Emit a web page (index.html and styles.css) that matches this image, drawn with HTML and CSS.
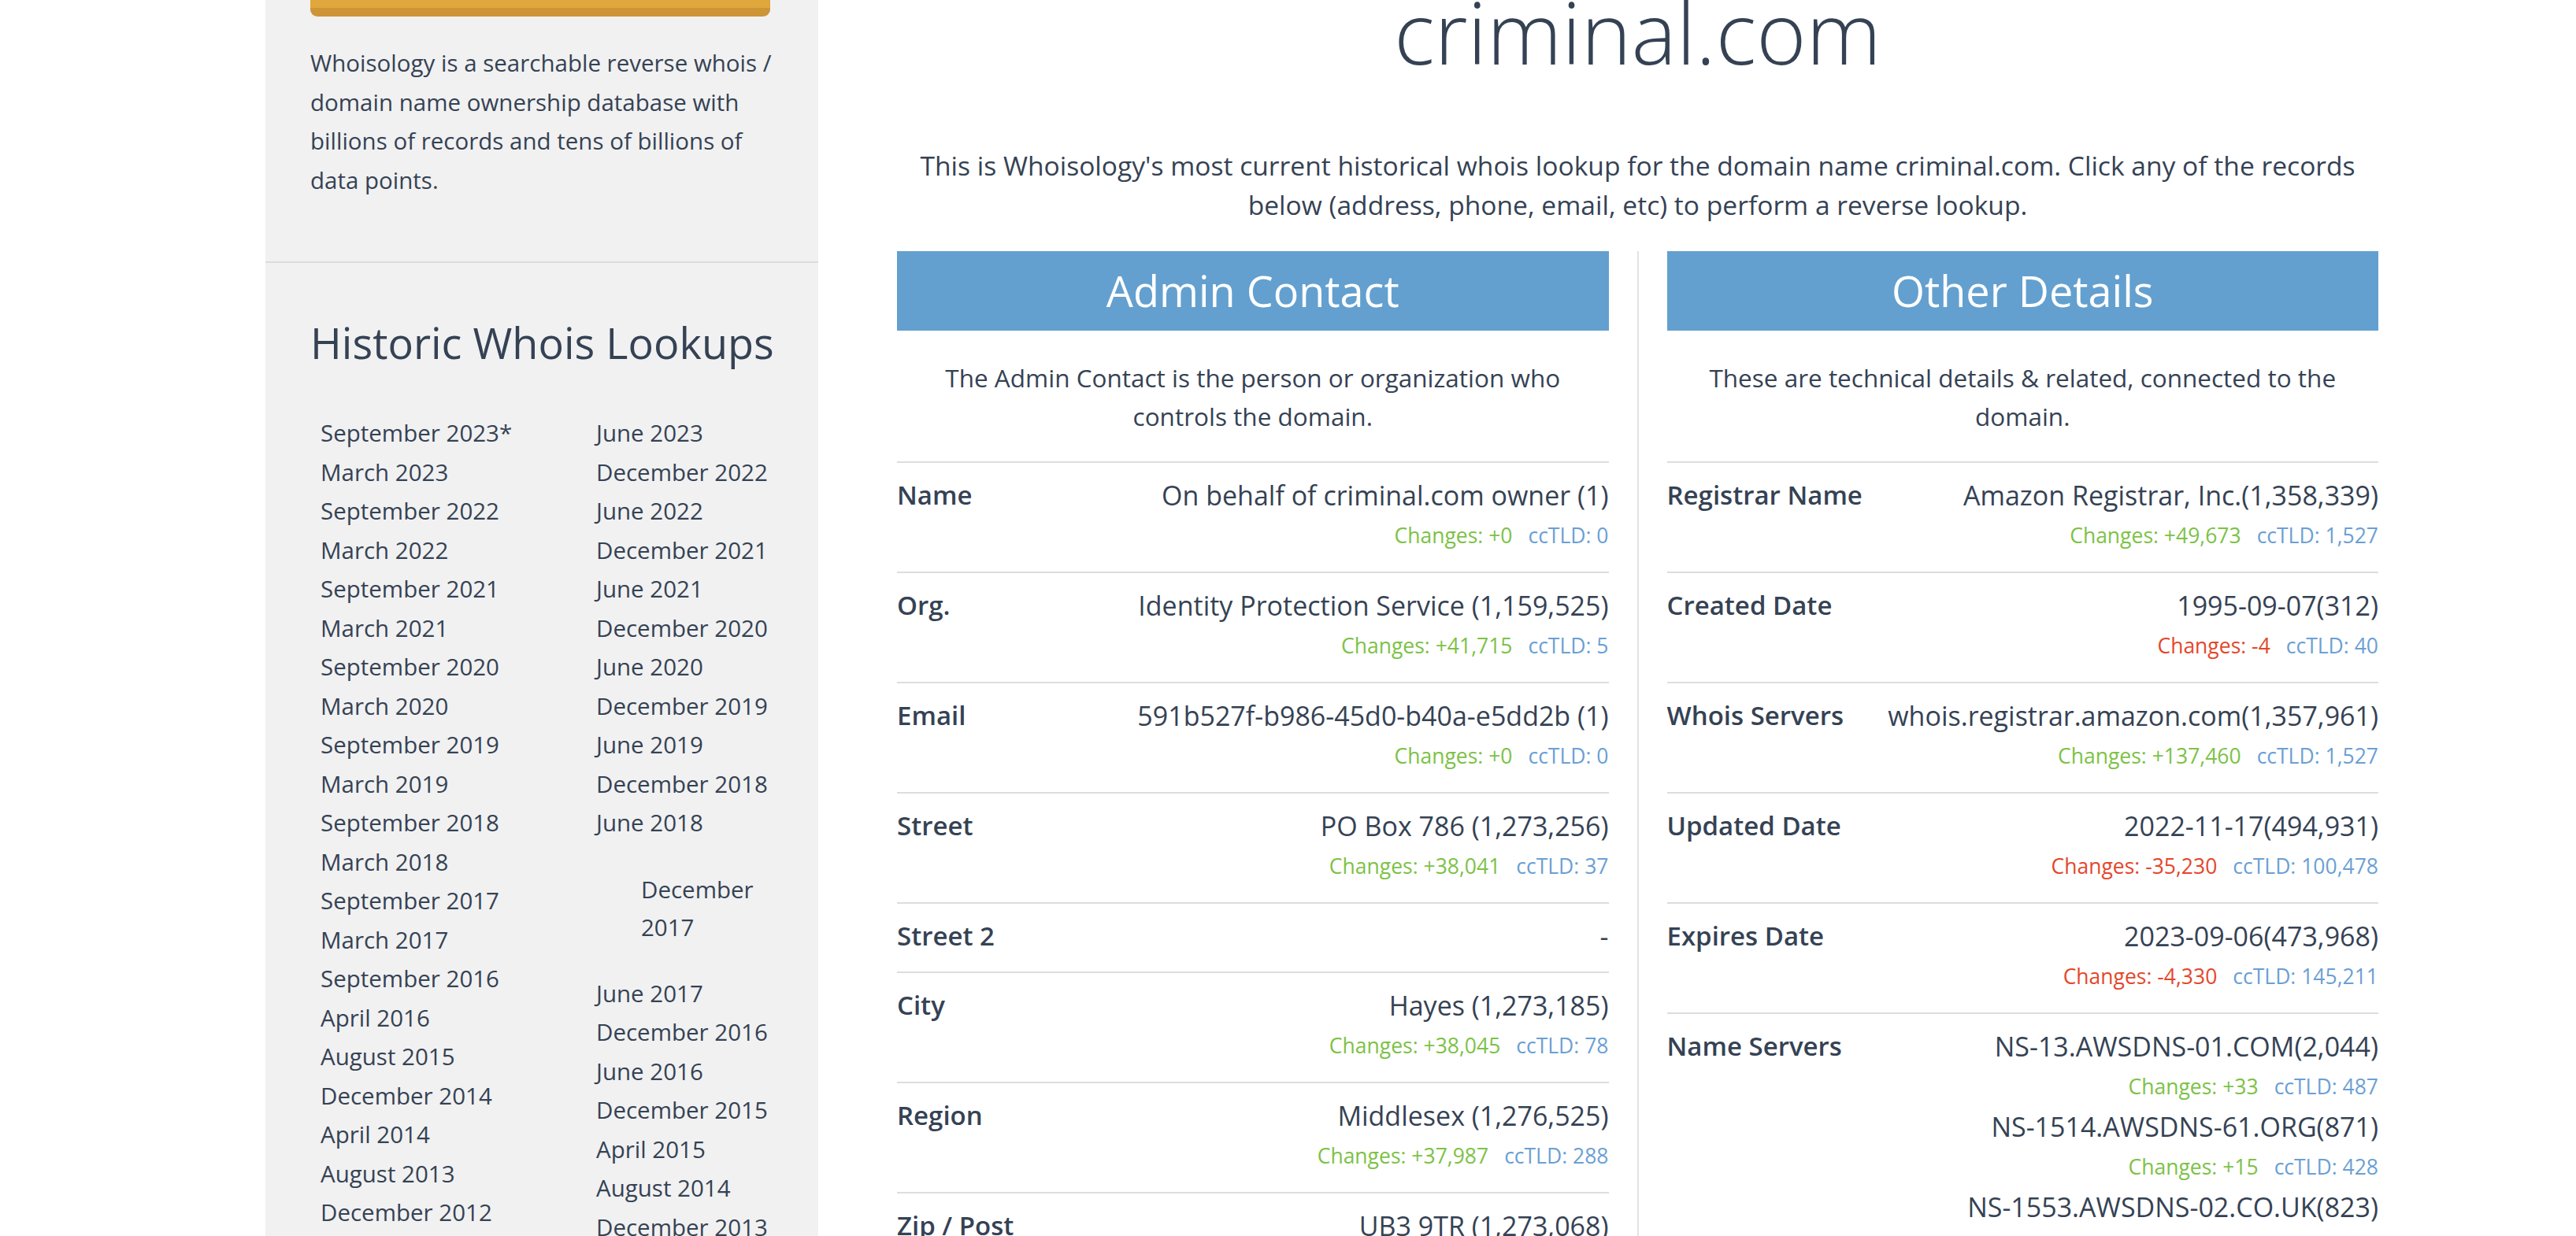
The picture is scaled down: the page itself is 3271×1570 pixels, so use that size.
FILE: index.html
```html
<!DOCTYPE html>
<html lang="en">
<head>
<meta charset="utf-8">
<title>criminal.com - Whoisology</title>
<link rel="stylesheet" href="styles.css">
</head>
<body>
<div class="page">
  <aside class="sidebar">
    <div class="sb-top">
      <a class="btn-gold" href="#"></a>
      <p class="sb-desc">Whoisology is a searchable reverse whois / domain name ownership database with billions of records and tens of billions of data points.</p>
    </div>
    <div class="sb-history">
      <h2 class="sb-title">Historic Whois Lookups</h2>
      <div class="hist-cols">
        <ul class="hist-col hist-col-a">
          <li>September 2023*</li>
          <li>March 2023</li>
          <li>September 2022</li>
          <li>March 2022</li>
          <li>September 2021</li>
          <li>March 2021</li>
          <li>September 2020</li>
          <li>March 2020</li>
          <li>September 2019</li>
          <li>March 2019</li>
          <li>September 2018</li>
          <li>March 2018</li>
          <li>September 2017</li>
          <li>March 2017</li>
          <li>September 2016</li>
          <li>April 2016</li>
          <li>August 2015</li>
          <li>December 2014</li>
          <li>April 2014</li>
          <li>August 2013</li>
          <li>December 2012</li>
        </ul>
        <ul class="hist-col hist-col-b">
          <li>June 2023</li>
          <li>December 2022</li>
          <li>June 2022</li>
          <li>December 2021</li>
          <li>June 2021</li>
          <li>December 2020</li>
          <li>June 2020</li>
          <li>December 2019</li>
          <li>June 2019</li>
          <li>December 2018</li>
          <li>June 2018</li>
          <li class="hist-odd">December 2017</li>
          <li>June 2017</li>
          <li>December 2016</li>
          <li>June 2016</li>
          <li>December 2015</li>
          <li>April 2015</li>
          <li>August 2014</li>
          <li>December 2013</li>
        </ul>
      </div>
    </div>
  </aside>

  <main class="main">
    <h1 class="domain">criminal.com</h1>
    <p class="intro">This is Whoisology's most current historical whois lookup for the domain name criminal.com. Click any of the records below (address, phone, email, etc) to perform a reverse lookup.</p>

    <div class="panels">
      <section class="panel">
        <h3 class="panel-bar">Admin Contact</h3>
        <p class="panel-desc">The Admin Contact is the person or organization who controls the domain.</p>

        <div class="row">
          <div class="label">Name</div>
          <div class="vals">
            <div class="val">On behalf of criminal.com owner (1)</div>
            <div class="chg"><span class="up">Changes: +0</span><span class="tld">ccTLD: 0</span></div>
          </div>
        </div>
        <div class="row">
          <div class="label">Org.</div>
          <div class="vals">
            <div class="val">Identity Protection Service (1,159,525)</div>
            <div class="chg"><span class="up">Changes: +41,715</span><span class="tld">ccTLD: 5</span></div>
          </div>
        </div>
        <div class="row">
          <div class="label">Email</div>
          <div class="vals">
            <div class="val">591b527f-b986-45d0-b40a-e5dd2b (1)</div>
            <div class="chg"><span class="up">Changes: +0</span><span class="tld">ccTLD: 0</span></div>
          </div>
        </div>
        <div class="row">
          <div class="label">Street</div>
          <div class="vals">
            <div class="val">PO Box 786 (1,273,256)</div>
            <div class="chg"><span class="up">Changes: +38,041</span><span class="tld">ccTLD: 37</span></div>
          </div>
        </div>
        <div class="row">
          <div class="label">Street 2</div>
          <div class="vals">
            <div class="val">-</div>
          </div>
        </div>
        <div class="row">
          <div class="label">City</div>
          <div class="vals">
            <div class="val">Hayes (1,273,185)</div>
            <div class="chg"><span class="up">Changes: +38,045</span><span class="tld">ccTLD: 78</span></div>
          </div>
        </div>
        <div class="row">
          <div class="label">Region</div>
          <div class="vals">
            <div class="val">Middlesex (1,276,525)</div>
            <div class="chg"><span class="up">Changes: +37,987</span><span class="tld">ccTLD: 288</span></div>
          </div>
        </div>
        <div class="row">
          <div class="label">Zip / Post</div>
          <div class="vals">
            <div class="val">UB3 9TR (1,273,068)</div>
            <div class="chg"><span class="up">Changes: +38,040</span><span class="tld">ccTLD: 37</span></div>
          </div>
        </div>
      </section>

      <div class="vdivider"></div>

      <section class="panel">
        <h3 class="panel-bar">Other Details</h3>
        <p class="panel-desc">These are technical details &amp; related, connected to the domain.</p>

        <div class="row">
          <div class="label">Registrar Name</div>
          <div class="vals">
            <div class="val">Amazon Registrar, Inc.(1,358,339)</div>
            <div class="chg"><span class="up">Changes: +49,673</span><span class="tld">ccTLD: 1,527</span></div>
          </div>
        </div>
        <div class="row">
          <div class="label">Created Date</div>
          <div class="vals">
            <div class="val">1995-09-07(312)</div>
            <div class="chg"><span class="down">Changes: -4</span><span class="tld">ccTLD: 40</span></div>
          </div>
        </div>
        <div class="row">
          <div class="label">Whois Servers</div>
          <div class="vals">
            <div class="val">whois.registrar.amazon.com(1,357,961)</div>
            <div class="chg"><span class="up">Changes: +137,460</span><span class="tld">ccTLD: 1,527</span></div>
          </div>
        </div>
        <div class="row">
          <div class="label">Updated Date</div>
          <div class="vals">
            <div class="val">2022-11-17(494,931)</div>
            <div class="chg"><span class="down">Changes: -35,230</span><span class="tld">ccTLD: 100,478</span></div>
          </div>
        </div>
        <div class="row">
          <div class="label">Expires Date</div>
          <div class="vals">
            <div class="val">2023-09-06(473,968)</div>
            <div class="chg"><span class="down">Changes: -4,330</span><span class="tld">ccTLD: 145,211</span></div>
          </div>
        </div>
        <div class="row">
          <div class="label">Name Servers</div>
          <div class="vals">
            <div class="val">NS-13.AWSDNS-01.COM(2,044)</div>
            <div class="chg"><span class="up">Changes: +33</span><span class="tld">ccTLD: 487</span></div>
            <div class="val">NS-1514.AWSDNS-61.ORG(871)</div>
            <div class="chg"><span class="up">Changes: +15</span><span class="tld">ccTLD: 428</span></div>
            <div class="val">NS-1553.AWSDNS-02.CO.UK(823)</div>
            <div class="chg"><span class="up">Changes: +12</span><span class="tld">ccTLD: 431</span></div>
          </div>
        </div>
      </section>
    </div>
  </main>
</div>
</body>
</html>
```

FILE: styles.css
```css
html, body {
  margin: 0;
  padding: 0;
  background: #ffffff;
}

body {
  font-family: "Open Sans", "Noto Sans", "Liberation Sans", sans-serif;
  color: #354254;
  overflow: hidden;
}

.page {
  display: flex;
  align-items: stretch;
  min-height: 100vh;
  padding-left: 337px;
}

/* ---------- sidebar ---------- */
.sidebar {
  width: 702px;
  flex: 0 0 702px;
  background: #f1f1f1;
}

.sb-top {
  padding: 0 61px 79px 57px;
  border-bottom: 2px solid #dcdcdc;
}

.btn-gold {
  display: block;
  height: 10px;
  background: #e0a73d;
  border-bottom: 11px solid #cd9536;
  border-radius: 0 0 9px 9px;
}

.sb-desc {
  margin: 34px -14px 0 0;
  font-size: 29.5px;
  line-height: 49.5px;
}

.sb-history {
  padding: 72px 61px 0 57px;
}

.sb-title {
  margin: 0;
  font-size: 54px;
  font-weight: 400;
  line-height: 59px;
  white-space: nowrap;
}

.hist-cols {
  display: flex;
  margin-top: 60px;
  padding-left: 13px;
}

.hist-col {
  list-style: none;
  margin: 0;
  padding: 0;
  font-size: 29.5px;
  line-height: 49.5px;
}

.hist-col-a {
  width: 350px;
  flex: 0 0 350px;
}

.hist-col-b {
  flex: 1;
}

.hist-odd {
  padding: 36px 0 35px 57px;
  line-height: 48px;
}

/* ---------- main ---------- */
.main {
  width: 1881px;
  flex: 0 0 1881px;
  margin-left: 100px;
}

.domain {
  margin: -13px 0 0;
  font-size: 108px;
  font-weight: 300;
  line-height: 108px;
  text-align: center;
}

.intro {
  margin: 90px 0 0;
  font-size: 33.6px;
  line-height: 50px;
  text-align: center;
}

.panels {
  display: grid;
  grid-template-columns: 1fr 2px 1fr;
  column-gap: 36px;
  margin-top: 34px;
}

.vdivider {
  background: #e3e3e3;
}

.panel-bar {
  margin: 0;
  height: 101px;
  line-height: 101px;
  background: #63a0cf;
  color: #ffffff;
  font-size: 54px;
  font-weight: 400;
  text-align: center;
}

.panel-desc {
  margin: 35px 0 33px;
  padding: 0 6px;
  font-size: 31.5px;
  line-height: 49px;
  text-align: center;
}

.row {
  display: flex;
  justify-content: space-between;
  align-items: flex-start;
  border-top: 2px solid #dddddd;
  padding: 16px 0 20px;
}

.label {
  font-size: 33px;
  font-weight: 600;
  line-height: 50px;
  white-space: nowrap;
}

.vals {
  text-align: right;
}

.val {
  font-size: 34px;
  line-height: 50px;
  white-space: nowrap;
}

.chg {
  font-size: 26.5px;
  line-height: 52px;
  white-space: nowrap;
}

.up {
  color: #7cc246;
}

.down {
  color: #e4472b;
}

.tld {
  color: #6b9fd4;
  margin-left: 20px;
}
```
